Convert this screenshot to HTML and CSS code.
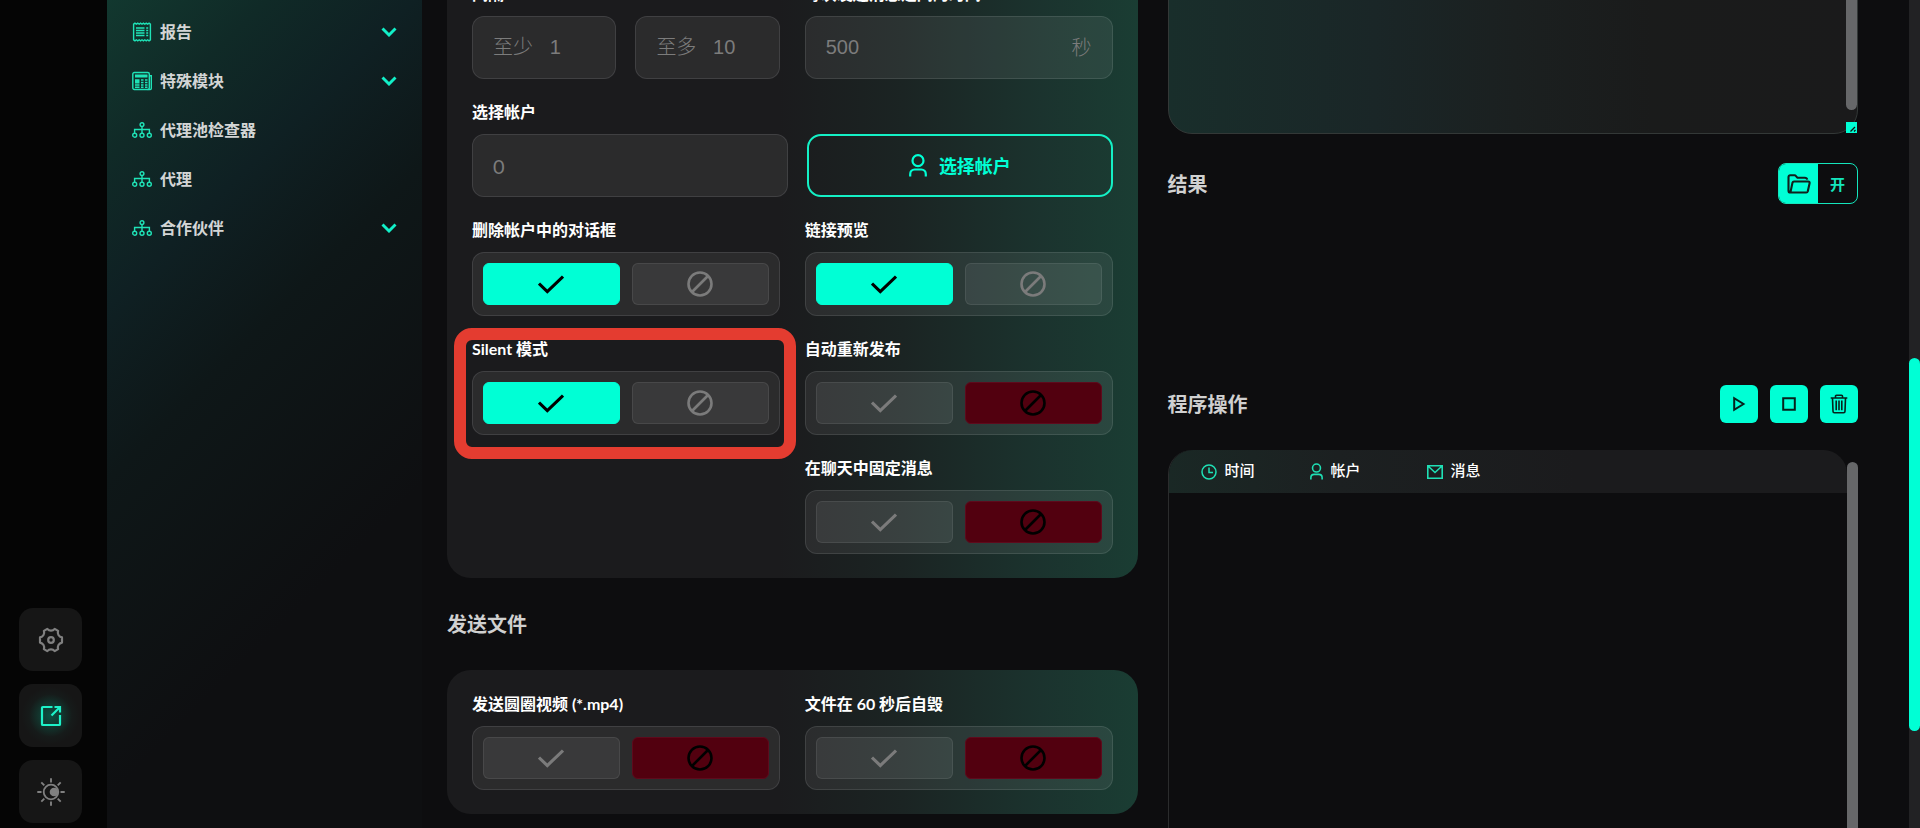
FILE: index.html
```html
<!DOCTYPE html>
<html lang="zh-CN">
<head>
    <meta charset="UTF-8">
    <meta name="viewport" content="width=device-width, initial-scale=1.0">
    <title>发送消息</title>
    <link rel="stylesheet" href="styles.css">
</head>
<body>

<!-- icons -->
<svg class="sprite" aria-hidden="true">
    <symbol id="i-check" viewBox="0 0 26 19"><path d="M1 8.5 9.3 16.500 25 1.500" fill="none" stroke="currentColor" stroke-width="3.1"/></symbol>
    <symbol id="i-ban" viewBox="0 0 26 26"><g fill="none" stroke="currentColor" stroke-width="2.600"><circle cx="13" cy="13" r="11.5"/><path d="M5 21 21 5"/></g></symbol>
    <symbol id="i-user" viewBox="0 0 18 23"><g fill="none" stroke="currentColor" stroke-width="2.200"><circle cx="9" cy="6.7" r="5.5"/><path d="M1.2 22.5v-2.3c0-2.6 1.9-4.7 4.5-4.7h6.6c2.6 0 4.5 2.1 4.5 4.7v2.3"/></g></symbol>
    <symbol id="i-chevron" viewBox="0 0 16 10"><path d="M1.5 1.5 8 8l6.500-6.500" fill="none" stroke="currentColor" stroke-width="2.900"/></symbol>
    <symbol id="i-tree" viewBox="0 0 20 16"><g fill="none" stroke="currentColor" stroke-width="1.400"><circle cx="10" cy="2.600" r="1.900"/><circle cx="2.700" cy="13.200" r="2"/><circle cx="10" cy="13.200" r="2"/><circle cx="17.300" cy="13.200" r="2"/><path d="M10 4.500v6.500M2.600 11V7.500h14.800V11"/></g></symbol>
    <symbol id="i-report" viewBox="0 0 20 20"><g fill="none" stroke="currentColor" stroke-width="1.400"><path d="M1.600 2.200v15.600l1.400 1 1.400-1 1.400 1 1.400-1 1.400 1 1.400-1 1.400 1 1.400-1 1.400 1 1.400-1 1.400 1 1.400-1V2.200l-1.400-1-1.400 1-1.400-1-1.400 1-1.400-1-1.400 1-1.400-1-1.400 1-1.400-1-1.400 1-1.400-1z"/><path d="M4 6h8.500M4 8.500h8.500M4 11h8.500M4 13.500h8.500M14.200 6h2M14.200 8.500h2M14.200 11h2M14.200 13.500h2"/></g></symbol>
    <symbol id="i-news" viewBox="0 0 20 20"><g fill="none" stroke="currentColor" stroke-width="1.400"><rect x=".8" y="1.500" width="16.500" height="17" rx="1.500"/><path d="M17.300 4.800h2v12.700c0 .6-.4 1-1 1h-2.600M9 9h2.500M13 9h2.500M9 11.500h2.500M13 11.500h2.500M3 14h4.500M9 14h2.500M13 14h2.500M3 16.300h4.500M9 16.300h2.500M13 16.300h2.500"/></g><path d="M3 3.600h12.500v2.800H3zM3 8.200h4.500v4.300H3z" fill="currentColor"/></symbol>
    <symbol id="i-gear" viewBox="0 0 26 26"><g fill="none" stroke="currentColor" stroke-width="2.200" stroke-linejoin="round"><path d="M9.300 1.900c2 2.400 5.400 2.400 7.400 0l3.400 2c-1 3 .7 5.900 3.900 6.500v5.200c-3.200.6-4.900 3.500-3.900 6.500l-3.400 2c-2-2.400-5.400-2.400-7.400 0l-3.400-2c1-3-.7-5.900-3.900-6.500v-5.200c3.200-.6 4.900-3.500 3.900-6.500z"/><circle cx="13" cy="13" r="2.800"/></g></symbol>
    <symbol id="i-export" viewBox="0 0 22 22"><path d="M12.500 2H2.800C2.300 2 2 2.300 2 2.800v16.400c0 .5.300.8.800.8h16.400c.5 0 .8-.3.800-.8V10M11.500 10.500 20 2M14.500 2H20v5.500" fill="none" stroke="currentColor" stroke-width="2.200"/></symbol>
    <symbol id="i-sun" viewBox="0 0 28 28"><circle cx="14" cy="14" r="7.300" fill="none" stroke="currentColor" stroke-width="1.800"/><circle cx="17" cy="14" r="4.300" fill="currentColor"/><path d="M14 .3v4.200M14 23.500v4.200M.3 14h4.200M23.500 14h4.200M4.300 4.300l3 3M20.700 20.700l3 3M4.300 23.700l3-3M20.700 7.300l3-3" stroke="currentColor" stroke-width="1.900"/></symbol>
    <symbol id="i-folder" viewBox="0 0 24 20"><path d="M3.300 18.500C2 18.500 1.500 17.700 1.500 16.700V3c0-1 .7-1.700 1.700-1.700h4.300c.6 0 1 .2 1.300.6l1.500 1.800h7.500c1.300 0 2.200.8 2.400 2M3.400 18.500 5.500 8.600C5.700 7.900 6.200 7.500 7 7.500h14.200c1 0 1.600.8 1.400 1.700l-1.800 8c-.2.800-.8 1.300-1.600 1.300z" fill="none" stroke="currentColor" stroke-width="2.100" stroke-linejoin="round"/></symbol>
    <symbol id="i-play" viewBox="0 0 14 16"><path d="M2.200 2.200v11.600L11.500 8z" fill="none" stroke="currentColor" stroke-width="2"/></symbol>
    <symbol id="i-stop" viewBox="0 0 14 14"><path d="M1.200 1.200h11.600v11.600H1.200z" fill="none" stroke="currentColor" stroke-width="2"/></symbol>
    <symbol id="i-trash" viewBox="0 0 18 20"><path d="M.7 4h16.600M5.500 4V2.300c0-.6.400-1 1-1h5c.6 0 1 .4 1 1V4M2.500 4l.5 13.300c0 .8.600 1.400 1.400 1.400h9.200c.8 0 1.400-.6 1.400-1.400L15.500 4M6.200 6.500v9.700M9 6.500v9.700M11.800 6.500v9.700" fill="none" stroke="currentColor" stroke-width="1.600"/></symbol>
    <symbol id="i-clock" viewBox="0 0 16 16"><g fill="none" stroke="currentColor" stroke-width="1.500"><circle cx="8" cy="8" r="7"/><path d="M8 3.500V8.500h4"/></g></symbol>
    <symbol id="i-mail" viewBox="0 0 16 14"><path d="M.8.8h14.400v12.400H.8zM1 1l7 6.500L15 1" fill="none" stroke="currentColor" stroke-width="1.600"/></symbol>
</svg>

<div class="app">

    <div class="rail">
        <button class="rail-btn" aria-label="设置"><svg width="26" height="26"><use href="#i-gear"/></svg></button>
        <button class="rail-btn active" aria-label="导出"><svg width="22" height="22"><use href="#i-export"/></svg></button>
        <button class="rail-btn" aria-label="主题"><svg width="28" height="28"><use href="#i-sun"/></svg></button>
    </div>

    <nav class="sidebar">
        <a href="#"><svg class="nav-icon" width="20" height="20"><use href="#i-report"/></svg><span>报告</span><svg class="chevron" width="16" height="10"><use href="#i-chevron"/></svg></a>
        <a href="#"><svg class="nav-icon" width="20" height="20"><use href="#i-news"/></svg><span>特殊模块</span><svg class="chevron" width="16" height="10"><use href="#i-chevron"/></svg></a>
        <a href="#"><svg class="nav-icon" width="20" height="16"><use href="#i-tree"/></svg><span>代理池检查器</span></a>
        <a href="#"><svg class="nav-icon" width="20" height="16"><use href="#i-tree"/></svg><span>代理</span></a>
        <a href="#"><svg class="nav-icon" width="20" height="16"><use href="#i-tree"/></svg><span>合作伙伴</span><svg class="chevron" width="16" height="10"><use href="#i-chevron"/></svg></a>
    </nav>

    <main class="content">
        <div class="column">
            <section class="card">
                <div class="row">
                    <div class="field">
                        <label class="label" for="min">间隔</label>
                        <div class="pair">
                            <input class="input" id="min" type="text" placeholder="至少   1">
                            <input class="input" id="max" type="text" placeholder="至多   10" aria-label="至多">
                        </div>
                    </div>
                    <div class="field">
                        <label class="label" for="delay">每次发送消息之间的时间</label>
                        <div class="input with-unit">
                            <input id="delay" type="text" placeholder="500">
                            <span>秒</span>
                        </div>
                    </div>
                </div>

                <div class="row row-accounts">
                    <div class="field">
                        <label class="label" for="accounts">选择帐户</label>
                        <input class="input count" id="accounts" type="text" placeholder="0">
                    </div>
                    <button class="btn-outline"><svg width="18" height="23"><use href="#i-user"/></svg>选择帐户</button>
                </div>

                <div class="row">
                    <div class="field" role="radiogroup" aria-labelledby="l-dialogs">
                        <div class="label" id="l-dialogs">删除帐户中的对话框</div>
                        <div class="toggle">
                            <label class="option yes"><input type="radio" name="dialogs" aria-label="是" checked><svg width="26" height="19"><use href="#i-check"/></svg></label>
                            <label class="option no"><input type="radio" name="dialogs" aria-label="否"><svg width="26" height="26"><use href="#i-ban"/></svg></label>
                        </div>
                    </div>
                    <div class="field" role="radiogroup" aria-labelledby="l-preview">
                        <div class="label" id="l-preview">链接预览</div>
                        <div class="toggle">
                            <label class="option yes"><input type="radio" name="preview" aria-label="是" checked><svg width="26" height="19"><use href="#i-check"/></svg></label>
                            <label class="option no"><input type="radio" name="preview" aria-label="否"><svg width="26" height="26"><use href="#i-ban"/></svg></label>
                        </div>
                    </div>
                </div>

                <div class="row">
                    <div class="field highlight" role="radiogroup" aria-labelledby="l-silent">
                        <div class="label" id="l-silent">Silent 模式</div>
                        <div class="toggle">
                            <label class="option yes"><input type="radio" name="silent" aria-label="是" checked><svg width="26" height="19"><use href="#i-check"/></svg></label>
                            <label class="option no"><input type="radio" name="silent" aria-label="否"><svg width="26" height="26"><use href="#i-ban"/></svg></label>
                        </div>
                    </div>
                    <div class="field" role="radiogroup" aria-labelledby="l-repost">
                        <div class="label" id="l-repost">自动重新发布</div>
                        <div class="toggle">
                            <label class="option yes"><input type="radio" name="repost" aria-label="是"><svg width="26" height="19"><use href="#i-check"/></svg></label>
                            <label class="option no"><input type="radio" name="repost" aria-label="否" checked><svg width="26" height="26"><use href="#i-ban"/></svg></label>
                        </div>
                    </div>
                </div>

                <div class="row">
                    <div></div>
                    <div class="field" role="radiogroup" aria-labelledby="l-pin">
                        <div class="label" id="l-pin">在聊天中固定消息</div>
                        <div class="toggle">
                            <label class="option yes"><input type="radio" name="pin" aria-label="是"><svg width="26" height="19"><use href="#i-check"/></svg></label>
                            <label class="option no"><input type="radio" name="pin" aria-label="否" checked><svg width="26" height="26"><use href="#i-ban"/></svg></label>
                        </div>
                    </div>
                </div>
            </section>

            <h2 class="title">发送文件</h2>

            <section class="card">
                <div class="row">
                    <div class="field" role="radiogroup" aria-labelledby="l-video">
                        <div class="label" id="l-video">发送圆圈视频 (*.mp4)</div>
                        <div class="toggle">
                            <label class="option yes"><input type="radio" name="video" aria-label="是"><svg width="26" height="19"><use href="#i-check"/></svg></label>
                            <label class="option no"><input type="radio" name="video" aria-label="否" checked><svg width="26" height="26"><use href="#i-ban"/></svg></label>
                        </div>
                    </div>
                    <div class="field" role="radiogroup" aria-labelledby="l-destroy">
                        <div class="label" id="l-destroy">文件在 60 秒后自毁</div>
                        <div class="toggle">
                            <label class="option yes"><input type="radio" name="destroy" aria-label="是"><svg width="26" height="19"><use href="#i-check"/></svg></label>
                            <label class="option no"><input type="radio" name="destroy" aria-label="否" checked><svg width="26" height="26"><use href="#i-ban"/></svg></label>
                        </div>
                    </div>
                </div>
            </section>
        </div>

        <div class="column">
            <div class="message">
                <textarea aria-label="消息"></textarea>
                <div class="scroll">
                    <div class="thumb"></div>
                    <svg class="grip" width="11" height="11" viewBox="0 0 11 11"><path d="M4.500 9.500 9 5M8 9.500l1.500-1.500" stroke="#111" stroke-width="1.300"/></svg>
                </div>
            </div>

            <div class="bar">
                <h2>结果</h2>
                <button class="open-btn"><span class="open-icon"><svg width="24" height="20"><use href="#i-folder"/></svg></span><span class="open-text">开</span></button>
            </div>
            <div class="results"></div>

            <div class="bar">
                <h2>程序操作</h2>
                <div class="actions">
                    <button aria-label="开始"><svg width="14" height="16"><use href="#i-play"/></svg></button>
                    <button aria-label="停止"><svg width="14" height="14"><use href="#i-stop"/></svg></button>
                    <button aria-label="清除"><svg width="18" height="20"><use href="#i-trash"/></svg></button>
                </div>
            </div>

            <div class="log">
                <div class="log-body">
                    <table>
                        <thead>
                            <tr>
                                <th class="col-time"><svg width="16" height="16"><use href="#i-clock"/></svg>时间</th>
                                <th class="col-user"><svg width="13" height="17"><use href="#i-user"/></svg>帐户</th>
                                <th><svg width="16" height="14"><use href="#i-mail"/></svg>消息</th>
                            </tr>
                        </thead>
                    </table>
                </div>
                <div class="scroll">
                    <div class="thumb"></div>
                </div>
            </div>
        </div>
    </main>

    <div class="page-scroll"><div class="page-thumb"></div></div>
</div>

</body>
</html>
```
FILE: styles.css
```css
* {
    box-sizing: border-box;
}
body {
    margin: 0;
    background: #0d0d0f;
    color: #fff;
    font-family: Lato, "Noto Sans CJK SC", sans-serif;
    font-size: 16px;
    line-height: 20px;
}
button, input, textarea {
    font: inherit;
    color: inherit;
}
button {
    padding: 0;
    border: none;
    cursor: pointer;
}
svg {
    display: block;
    flex: none;
}
.sprite {
    display: none;
}
.app {
    display: flex;
    height: 100vh;
    overflow: hidden;
}

/* left rail */
.rail {
    width: 107px;
    flex: none;
    background: #050505;
    display: flex;
    flex-direction: column;
    justify-content: flex-end;
    gap: 13px;
    padding: 0 0 5px 19px;
}
.rail-btn {
    width: 63px;
    height: 63px;
    border-radius: 14px;
    background: #161616;
    color: #808080;
    display: flex;
    align-items: center;
    justify-content: center;
}
.rail-btn.active {
    color: #1df2c8;
    background: radial-gradient(circle, #0a5142 0, #123a31 22%, #161b1a 48%, #161616 65%);
}

/* menu */
.sidebar {
    width: 315px;
    flex: none;
    padding-top: 7px;
    background: linear-gradient(135deg, #12382f 0, #102a27 14%, #0f2023 27%, #0e1718 42%, #0e0f11 70%);
}
.sidebar a {
    display: flex;
    align-items: center;
    gap: 8px;
    height: 49px;
    padding: 0 25px;
    color: #d3d5d5;
    font-weight: bold;
    text-decoration: none;
}
.nav-icon {
    color: #1fe3b7;
}
.chevron {
    margin-left: auto;
    color: #12f0c8;
}

/* content, scrolled a little */
.content {
    flex: 1;
    min-width: 0;
    height: calc(100vh + 40px);
    margin-top: -40px;
    padding: 0 51px 0 25px;
    display: grid;
    grid-template-columns: 1fr 1fr;
    gap: 30px;
}
.column {
    display: flex;
    flex-direction: column;
    min-width: 0;
}
.card {
    display: flex;
    flex-direction: column;
    gap: 23px;
    padding: 24px 25px;
    border-radius: 24px;
    background: linear-gradient(90deg, #1b1b1d 0, #1b1b1d 48%, #1b2423 66%, #1b332e 86%, #1a3d33 100%);
}
.row {
    display: grid;
    grid-template-columns: 1fr 1fr;
    gap: 25px;
}
.row-accounts {
    grid-template-columns: 316fr 305fr;
    gap: 19px;
    align-items: end;
}
.field {
    display: flex;
    flex-direction: column;
    gap: 12px;
    min-width: 0;
}
.label {
    font-weight: bold;
}
.pair {
    display: flex;
    gap: 19px;
}
.input {
    width: 100%;
    min-width: 0;
    height: 63px;
    padding: 0 20px;
    border: 1px solid rgba(255, 255, 255, 0.1);
    border-radius: 12px;
    background: rgba(255, 255, 255, 0.07);
    color: #7c7c7c;
    font-family: "Liberation Sans", "Noto Sans CJK SC", sans-serif;
    font-size: 20px;
    font-weight: 300;
    outline: none;
}
.input.count {
    font-family: Lato, sans-serif;
    font-weight: 400;
}
input::placeholder {
    color: #7c7c7c;
    opacity: 1;
}
.with-unit {
    display: flex;
    align-items: center;
}
.with-unit input {
    flex: 1;
    min-width: 0;
    padding: 0;
    border: none;
    background: none;
    outline: none;
}
.btn-outline {
    display: flex;
    align-items: center;
    justify-content: center;
    gap: 12px;
    height: 63px;
    border: 2px solid #14f0c5;
    border-radius: 14px;
    background: none;
    color: #00ffd5;
    font-size: 18px;
    font-weight: bold;
}

/* yes / no toggle */
.toggle {
    display: grid;
    grid-template-columns: 1fr 1fr;
    gap: 12px;
    padding: 10px;
    border: 1px solid rgba(255, 255, 255, 0.1);
    border-radius: 12px;
    background: rgba(255, 255, 255, 0.07);
}
.option {
    position: relative;
    display: flex;
    align-items: center;
    justify-content: center;
    height: 42px;
    border: 1px solid rgba(255, 255, 255, 0.08);
    border-radius: 6px;
    background: rgba(255, 255, 255, 0.07);
    color: #7b7b7b;
    cursor: pointer;
}
.option input {
    position: absolute;
    inset: 0;
    width: 100%;
    height: 100%;
    margin: 0;
    opacity: 0;
    cursor: pointer;
}
.option:has(input:checked) {
    color: #000;
}
.yes:has(input:checked) {
    background: #00ffd5;
    border-color: #00ffd5;
}
.no:has(input:checked) {
    background: #52000f;
    border-color: #5e0a1c;
}
.highlight {
    position: relative;
}
.highlight::after {
    content: "";
    position: absolute;
    inset: -11px -16px -24px -18px;
    border: 12px solid #e43c30;
    border-radius: 18px;
    pointer-events: none;
}

.title, .bar h2 {
    margin: 0;
    color: #d0d0d0;
    font-size: 20px;
    font-weight: bold;
    line-height: 24px;
}
.title {
    padding: 34px 0;
}

/* message box */
.message {
    display: flex;
    height: 174px;
    border: 1px solid #333837;
    border-radius: 24px;
    background: linear-gradient(90deg, #192e2b 0, #1a2627 30%, #1b2020 50%, #1a1b1b 70%, #1a1a1b 100%);
}
.message textarea {
    flex: 1;
    min-width: 0;
    padding: 20px;
    border: none;
    background: none;
    outline: none;
    resize: none;
}
.scroll {
    width: 11px;
    flex: none;
    display: flex;
    flex-direction: column;
    gap: 12px;
}
.thumb {
    flex: 1;
    border-radius: 6px;
    background: #666769;
}
.grip {
    background: #00ffd5;
}

.bar {
    display: flex;
    align-items: center;
    justify-content: space-between;
}
.message + .bar {
    margin-top: 29px;
}
.open-btn {
    display: flex;
    width: 80px;
    height: 41px;
    border: 1px solid #14e6bd;
    border-radius: 8px;
    overflow: hidden;
    background: #0d0d0f;
    color: #14e6bd;
    font-size: 15px;
    font-weight: bold;
}
.open-icon, .open-text {
    flex: 1;
    height: 100%;
    display: flex;
    align-items: center;
    justify-content: center;
}
.open-icon {
    background: #00ffd5;
    color: #10201c;
}
.results {
    height: 181px;
}
.actions {
    display: flex;
    gap: 12px;
}
.actions button {
    width: 38px;
    height: 38px;
    border-radius: 6px;
    background: #00ffd5;
    color: #06221c;
    display: flex;
    align-items: center;
    justify-content: center;
}

/* log */
.log {
    flex: 1;
    display: flex;
    margin-top: 27px;
    border-left: 1px solid #2b2c2d;
    border-top-left-radius: 24px;
}
.log-body {
    flex: 1;
}
.log table {
    width: 100%;
    border-collapse: collapse;
    border-radius: 24px 24px 0 0;
    background: linear-gradient(90deg, #1a2825 0, #1c2021 25%, #1b1b1d 60%);
}
.log th {
    height: 43px;
    padding: 0 0 3px 32px;
    text-align: left;
    font-size: 15px;
    font-weight: 500;
}
.log th svg {
    display: inline-block;
    vertical-align: middle;
    margin-right: 8px;
    color: #1fe0b5;
}
.col-time {
    width: 109px;
}
.col-user {
    width: 117px;
}
.log .scroll {
    padding-top: 12px;
}
.log .thumb {
    border-radius: 6px 6px 0 0;
}

/* page scrollbar */
.page-scroll {
    width: 11px;
    flex: none;
    background: #222224;
    display: grid;
    grid-template-rows: 358fr 373fr 97fr;
}
.page-thumb {
    grid-row: 2;
    border-radius: 6px;
    background: #00ffd5;
}
```
